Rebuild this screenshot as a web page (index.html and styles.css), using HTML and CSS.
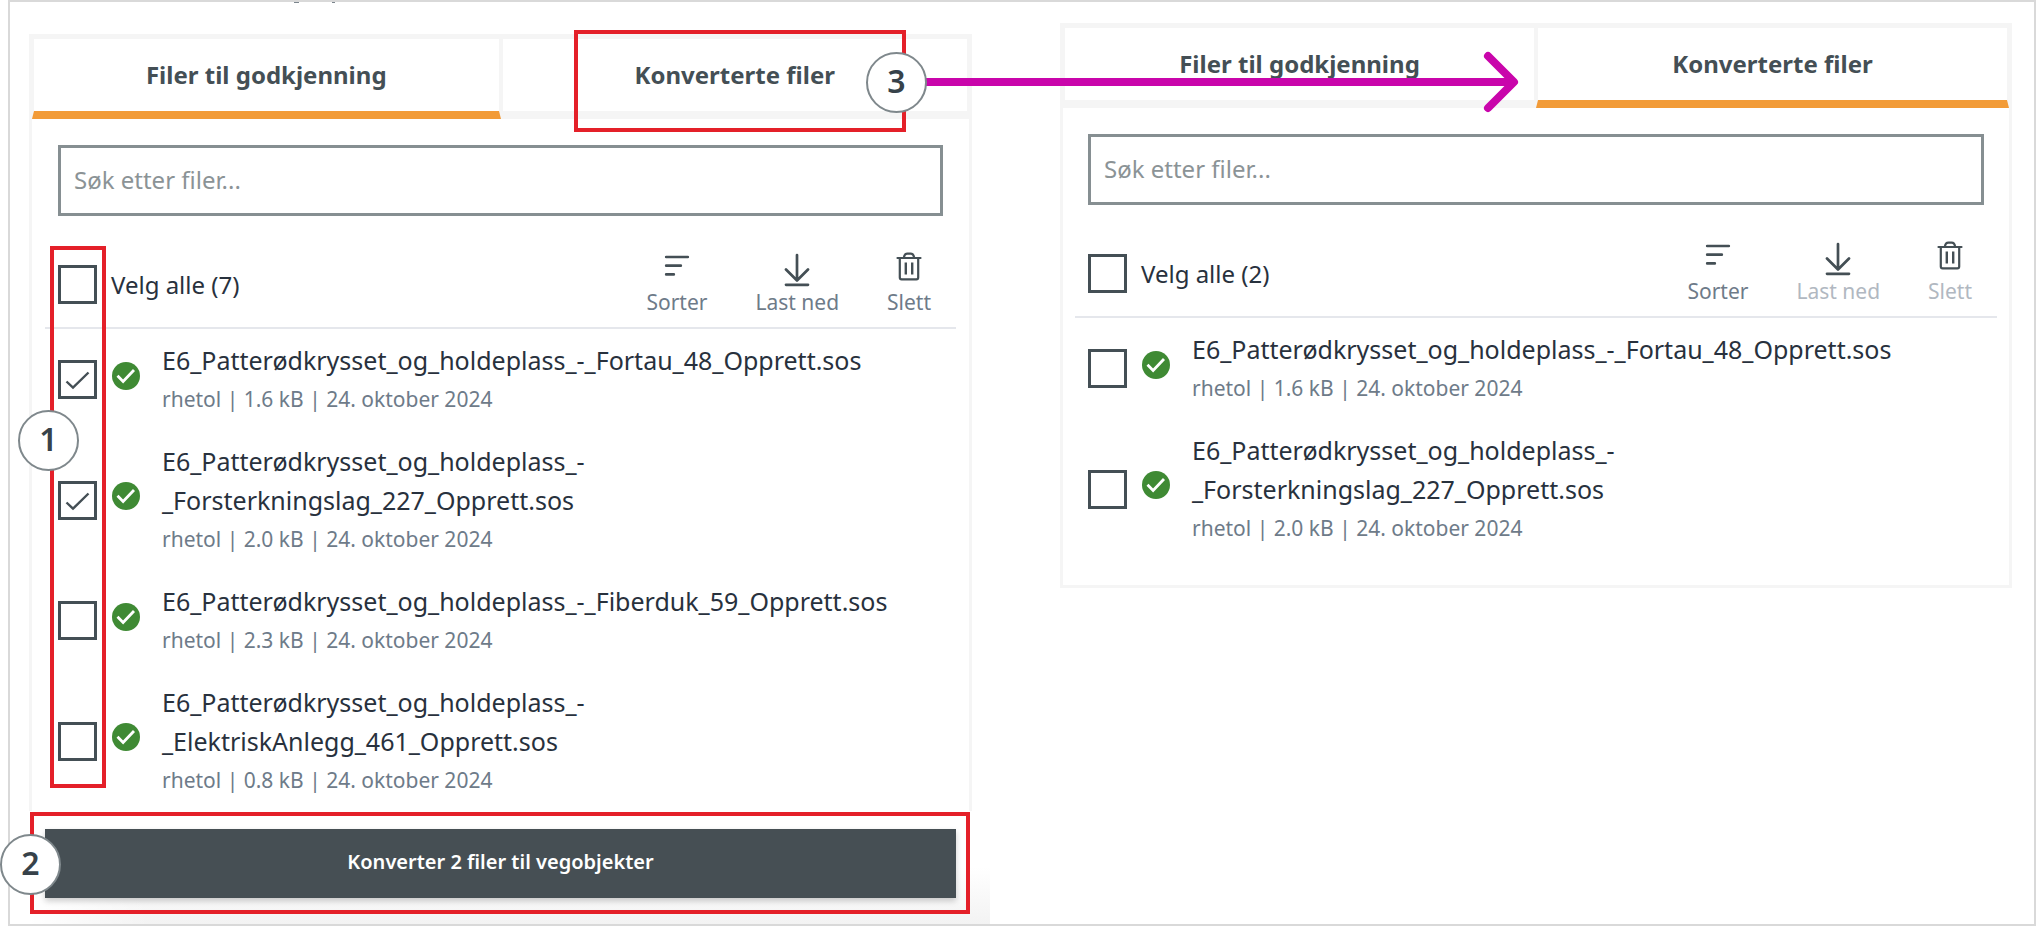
FILE: index.html
```html
<!DOCTYPE html>
<html lang="nb">
<head>
<meta charset="utf-8">
<title>Filer til godkjenning</title>
<link rel="stylesheet" href="styles.css">
</head>
<body>
<svg class="sprite" aria-hidden="true">
  <symbol id="i-sort" viewBox="0 0 34 34">
    <path d="M6.200 7h21.600M6.200 15.700h14.600M6.200 24.400h7.600" fill="none" stroke="currentColor" stroke-width="2.700" stroke-linecap="round"/>
  </symbol>
  <symbol id="i-download" viewBox="0 0 34 34">
    <path d="M17 5v25M6 19.500l11 11 11-11" fill="none" stroke="currentColor" stroke-width="2.700" stroke-linecap="round" stroke-linejoin="round"/>
    <path d="M6 34.800h22" fill="none" stroke="currentColor" stroke-width="2.700" stroke-linecap="round"/>
  </symbol>
  <symbol id="i-trash" viewBox="0 0 34 34">
    <path d="M5.500 8h23M7.800 8v19.500q0 1.800 1.800 1.800h14.800q1.800 0 1.800-1.800V8M11.800 8q.6-4.300 3.600-4.300h3.200q3 0 3.600 4.300" fill="none" stroke="currentColor" stroke-width="2.200" stroke-linecap="round" stroke-linejoin="round"/>
    <path d="M13.800 12.500v12M20.200 12.500v12" fill="none" stroke="currentColor" stroke-width="2.400"/>
  </symbol>
  <symbol id="i-ok" viewBox="0 0 28 28">
    <circle cx="14" cy="14" r="14" fill="#3f8a34"/>
    <path d="M5.500 13.800l5.600 5.600L22 8" fill="none" stroke="#fff" stroke-width="2.800"/>
  </symbol>
</svg>

<main class="frame">
  <span class="cut-text cut-a"></span>
  <span class="cut-text cut-b"></span>

  <section class="panel panel-left">
    <div class="tabs" role="tablist">
      <button class="tab active" role="tab" aria-selected="true">Filer til godkjenning</button>
      <button class="tab" role="tab" aria-selected="false">Konverterte filer</button>
    </div>
    <div class="body">
      <input class="search" type="text" placeholder="Søk etter filer..." aria-label="Søk etter filer">
      <div class="toolbar">
        <input class="check" type="checkbox" id="all-a">
        <label class="all" for="all-a">Velg alle (7)</label>
        <div class="actions">
          <button class="action"><svg class="icon"><use href="#i-sort"/></svg>Sorter</button>
          <button class="action"><svg class="icon"><use href="#i-download"/></svg>Last ned</button>
          <button class="action"><svg class="icon"><use href="#i-trash"/></svg>Slett</button>
        </div>
      </div>
      <ul class="files">
        <li class="file">
          <input class="check" type="checkbox" id="a1" checked>
          <svg class="ok"><use href="#i-ok"/></svg>
          <label class="info" for="a1"><span class="name">E6_Patterødkrysset_og_holdeplass_-_Fortau_48_Opprett.sos</span><span class="meta">rhetol | 1.6 kB | 24. oktober 2024</span></label>
        </li>
        <li class="file">
          <input class="check" type="checkbox" id="a2" checked>
          <svg class="ok"><use href="#i-ok"/></svg>
          <label class="info" for="a2"><span class="name">E6_Patterødkrysset_og_holdeplass_-<wbr>_Forsterkningslag_227_Opprett.sos</span><span class="meta">rhetol | 2.0 kB | 24. oktober 2024</span></label>
        </li>
        <li class="file">
          <input class="check" type="checkbox" id="a3">
          <svg class="ok"><use href="#i-ok"/></svg>
          <label class="info" for="a3"><span class="name">E6_Patterødkrysset_og_holdeplass_-_Fiberduk_59_Opprett.sos</span><span class="meta">rhetol | 2.3 kB | 24. oktober 2024</span></label>
        </li>
        <li class="file">
          <input class="check" type="checkbox" id="a4">
          <svg class="ok"><use href="#i-ok"/></svg>
          <label class="info" for="a4"><span class="name">E6_Patterødkrysset_og_holdeplass_-<wbr>_ElektriskAnlegg_461_Opprett.sos</span><span class="meta">rhetol | 0.8 kB | 24. oktober 2024</span></label>
        </li>
      </ul>
    </div>
    <div class="footer">
      <button class="convert">Konverter 2 filer til vegobjekter</button>
    </div>
  </section>

  <section class="panel panel-right">
    <div class="tabs" role="tablist">
      <button class="tab" role="tab" aria-selected="false">Filer til godkjenning</button>
      <button class="tab active" role="tab" aria-selected="true">Konverterte filer</button>
    </div>
    <div class="body">
      <input class="search" type="text" placeholder="Søk etter filer..." aria-label="Søk etter konverterte filer">
      <div class="toolbar">
        <input class="check" type="checkbox" id="all-b">
        <label class="all" for="all-b">Velg alle (2)</label>
        <div class="actions">
          <button class="action"><svg class="icon"><use href="#i-sort"/></svg>Sorter</button>
          <button class="action" disabled><svg class="icon"><use href="#i-download"/></svg>Last ned</button>
          <button class="action" disabled><svg class="icon"><use href="#i-trash"/></svg>Slett</button>
        </div>
      </div>
      <ul class="files">
        <li class="file">
          <input class="check" type="checkbox" id="b1">
          <svg class="ok"><use href="#i-ok"/></svg>
          <label class="info" for="b1"><span class="name">E6_Patterødkrysset_og_holdeplass_-_Fortau_48_Opprett.sos</span><span class="meta">rhetol | 1.6 kB | 24. oktober 2024</span></label>
        </li>
        <li class="file">
          <input class="check" type="checkbox" id="b2">
          <svg class="ok"><use href="#i-ok"/></svg>
          <label class="info" for="b2"><span class="name">E6_Patterødkrysset_og_holdeplass_-<wbr>_Forsterkningslag_227_Opprett.sos</span><span class="meta">rhetol | 2.0 kB | 24. oktober 2024</span></label>
        </li>
      </ul>
    </div>
  </section>
</main>

<div class="mark mark-checks"></div>
<div class="mark mark-convert"></div>
<div class="mark mark-tab"></div>
<svg class="arrow" viewBox="0 0 608 68" aria-hidden="true">
  <path d="M0 34H592M568 8l26 26-26 26" fill="none" stroke="#c905ab" stroke-width="8" stroke-linecap="round" stroke-linejoin="round"/>
</svg>
<span class="step step-1">1</span>
<span class="step step-2">2</span>
<span class="step step-3">3</span>
</body>
</html>
```
FILE: styles.css
```css
* {
  box-sizing: border-box;
}

body {
  position: relative;
  margin: 0;
  background: #fff;
  color: #28313d;
  font-family: "Noto Sans", "Open Sans", sans-serif;
}

button,
input {
  margin: 0;
  font-family: inherit;
}

.sprite {
  position: absolute;
  width: 0;
  height: 0;
}

.sprite symbol {
  overflow: visible;
}

.frame {
  position: relative;
  display: grid;
  grid-template-columns: 943fr 952fr;
  align-items: start;
  gap: 88px;
  min-height: 100vh;
  margin-left: 8px;
  padding: 0 22px 0 19px;
  border: 2px solid #d9d9d9;
}

.cut-text {
  position: absolute;
  top: 0;
  height: 1px;
  background: #7b858d;
}

.cut-a {
  left: 284px;
  width: 5px;
}

.cut-b {
  left: 322px;
  width: 3px;
}

.panel {
  border: 3px solid #f5f5f5;
}

.panel-left {
  margin-top: 32px;
  border-bottom: 0;
}

.panel-right {
  margin-top: 21px;
  padding-bottom: 26px;
}

.tabs {
  display: grid;
  grid-template-columns: 1fr 1fr;
}

.tab {
  height: 82px;
  padding: 0;
  border: 2px solid #f5f5f5;
  border-bottom-width: 8px;
  background: #fff;
  color: #444f55;
  font-size: 24px;
  font-weight: 700;
  line-height: 32px;
}

.tab.active {
  border-bottom-color: #f29b38;
}

.body {
  padding: 26px 13px 0;
}

.panel-right .body {
  padding: 26px 12px 0;
}

.search {
  display: block;
  width: calc(100% - 26px);
  height: 71px;
  margin: 0 13px;
  padding: 0 13px 2px;
  border: 3px solid #868f92;
  border-radius: 0;
  background: #fff;
  color: #28313d;
  font-size: 24px;
}

.search::placeholder {
  color: #8b9396;
  opacity: 1;
}

.toolbar {
  display: flex;
  align-items: center;
  height: 113px;
  padding: 26px 25px 0 13px;
  border-bottom: 2px solid #e5e7ec;
}

.check {
  flex: none;
  width: 39px;
  height: 39px;
  border: 3px solid #444f55;
  border-radius: 0;
  background: #fff;
  appearance: none;
}

.check:checked {
  background: #fff url("data:image/svg+xml,%3Csvg xmlns='http://www.w3.org/2000/svg' viewBox='0 0 33 33'%3E%3Cpath d='M5.500 18.500l6.500 6.200L27.500 9.500' fill='none' stroke='%23444f55' stroke-width='2.400'/%3E%3C/svg%3E") center / 33px 33px no-repeat;
}

.all {
  margin-left: 14px;
  font-size: 24px;
  line-height: 40px;
}

.actions {
  display: flex;
  gap: 48px;
  margin-left: auto;
}

.action {
  display: flex;
  flex-direction: column;
  align-items: center;
  padding: 0;
  border: 0;
  background: none;
  color: #6e7b89;
  font-size: 21px;
  line-height: 36px;
}

.action:disabled {
  color: #b1b8c1;
}

.icon {
  width: 34px;
  height: 34px;
  overflow: visible;
  color: #444f55;
}

.files {
  margin: 0;
  padding: 0;
  list-style: none;
}

.file {
  display: flex;
  align-items: center;
  padding: 12px 13px;
}

.ok {
  flex: none;
  width: 28px;
  height: 28px;
  margin: 0 22px 8px 15px;
}

.info {
  flex: 1;
  min-width: 0;
}

.name,
.meta {
  display: block;
}

.name {
  font-size: 25px;
  line-height: 39px;
}

.meta {
  color: #6e7b89;
  font-size: 21px;
  line-height: 38px;
}

.footer {
  margin: 0 -21px 0 -3px;
  padding: 18px 34px 26px 16px;
  background: linear-gradient(to right, #fff, transparent 120px), linear-gradient(#fff 50%, #f3f3f3);
}

.convert {
  display: block;
  width: 100%;
  height: 69px;
  padding: 0 0 4px;
  border: 0;
  background: #464f54;
  box-shadow: 0 3px 6px #0003;
  color: #fff;
  font-size: 20px;
  font-weight: 600;
}

.mark {
  position: absolute;
  border: 4px solid #e42029;
  pointer-events: none;
}

.mark-checks {
  left: 50px;
  top: 246px;
  width: 56px;
  height: 542px;
}

.mark-convert {
  left: 30px;
  top: 812px;
  width: 940px;
  height: 102px;
}

.mark-tab {
  left: 574px;
  top: 30px;
  width: 332px;
  height: 102px;
}

.arrow {
  position: absolute;
  left: 920px;
  top: 48px;
  width: 608px;
  height: 68px;
  pointer-events: none;
}

.step {
  position: absolute;
  width: 61px;
  height: 61px;
  border: 2px solid #7f888c;
  border-radius: 50%;
  background: #fff;
  color: #37424a;
  font-size: 32px;
  font-weight: 600;
  line-height: 54px;
  text-align: center;
}

.step-1 {
  left: 18px;
  top: 410px;
}

.step-2 {
  left: 0;
  top: 834px;
}

.step-3 {
  left: 866px;
  top: 52px;
}
```
